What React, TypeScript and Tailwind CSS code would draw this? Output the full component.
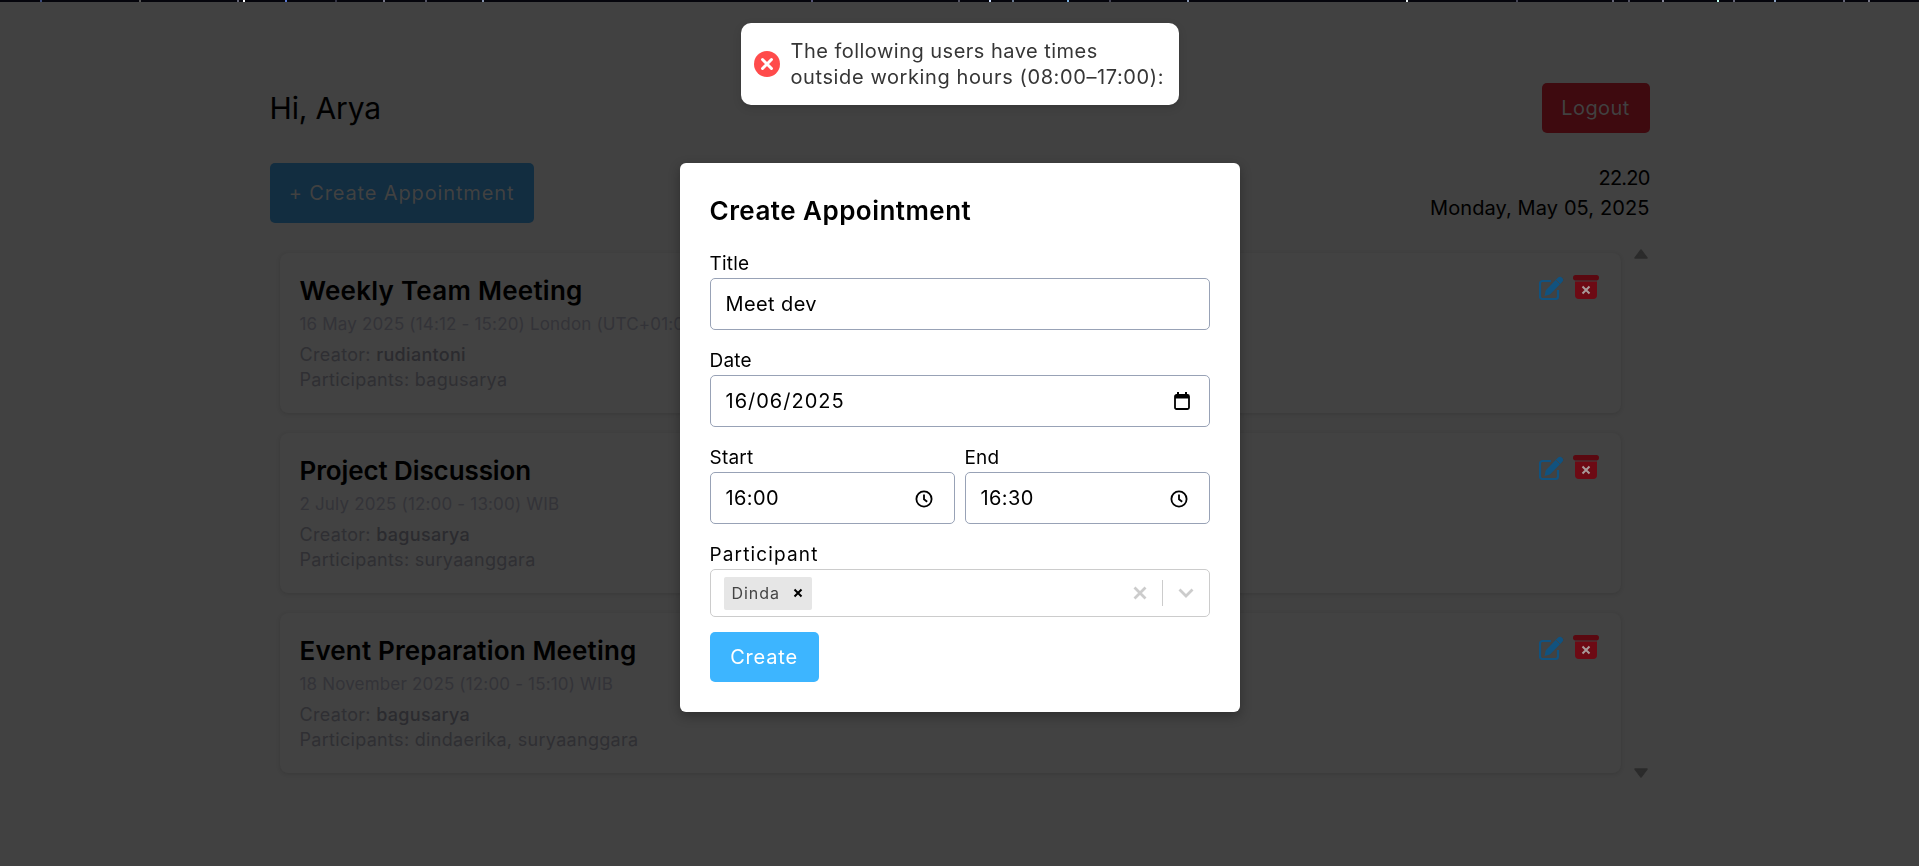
import React from "react";

const specks: [number, string][] = [
  [40, "#3a4a7a"], [139, "#555"], [237, "#667"], [243, "#fff"], [285, "#5a7ad0"], [335, "#334"], [383, "#778"], [425, "#556"], [482, "#8896b0"],
  [811, "#557"], [958, "#556"], [989, "#cfe0ff"], [1012, "#6a7a90"], [1067, "#7ab0e0"], [1109, "#445"], [1187, "#8896b0"],
  [1406, "#e8f0f0"], [1516, "#445"], [1612, "#667"], [1628, "#556"], [1662, "#889"], [1717, "#bfe"], [1733, "#667"], [1774, "#8aa0c0"], [1843, "#667"], [1868, "#778"],
];

function StarStrip() {
  return (
    <svg width="1919" height="2" className="block bg-[#05050c]">
      {specks.map(([x, c]) => (
        <rect key={x} x={x} y="0" width="2" height="2" fill={c} />
      ))}
    </svg>
  );
}

function EditIcon() {
  return (
    <svg width="25" height="25" viewBox="0 0 25 25" fill="none">
      <path d="M12 6H3.5A2.5 2.5 0 0 0 1 8.5v13A2.5 2.5 0 0 0 3.5 24h13a2.5 2.5 0 0 0 2.5-2.5V15" stroke="#11527f" strokeWidth="2.2" />
      <path d="M5.5 21 6.8 15.2 18.8 2.8a3 3 0 0 1 4.3 0 3 3 0 0 1 0 4.3L11 19.5Z" fill="#11527f" stroke="#424242" strokeWidth="1" paintOrder="stroke" />
      <path d="M16.8 4.8 21 9" stroke="#424242" strokeWidth="0.8" />
    </svg>
  );
}

function TrashIcon() {
  return (
    <svg width="26" height="24" viewBox="0 0 26 24" fill="none">
      <rect x="0" y="0" width="26" height="5.5" rx="2.7" fill="#5a0810" />
      <path d="M2 6.5h22V20a4 4 0 0 1-4 4H6a4 4 0 0 1-4-4Z" fill="#6d0a14" />
      <path d="M9.5 11.5 16.5 18.5M16.5 11.5 9.5 18.5" stroke="#a89a9a" strokeWidth="2" />
    </svg>
  );
}

function Card({ title, titleTracking, when, creator, participants }: { title: string; titleTracking: string; when: string; creator: string; participants: string }) {
  return (
    <div className="flex justify-between rounded-lg bg-[#424242] pt-5 pr-[22px] pb-[21px] pl-5 shadow-[0_1px_4px_rgba(0,0,0,0.12)]">
      <div>
        <h3 className={`pt-px text-[26px] leading-[33px] font-semibold text-black ${titleTracking}`}>{title}</h3>
        <p className="mt-1 text-[17px] leading-[27px] tracking-[0.01em] text-[#333338]">{when}</p>
        <p className="mt-1 text-[18px] leading-[25px] tracking-[0.017em] text-[#2f2f33]">
          Creator: <span className="font-medium text-[#2b2b2f]">{creator}</span>
        </p>
        <p className="text-[18px] leading-[25px] tracking-[0.017em] text-[#2f2f33]">Participants: {participants}</p>
      </div>
      <div className="mt-0.5 flex items-start gap-[9px] self-start">
        <EditIcon />
        <TrashIcon />
      </div>
    </div>
  );
}

function FieldLabel({ children, tracking = "tracking-[0.01em]" }: { children: React.ReactNode; tracking?: string }) {
  return <div className={`flex h-[30px] items-center pt-0.5 text-[19px] text-black ${tracking}`}>{children}</div>;
}

function FieldBox({ children, icon, tracking = "tracking-[0.02em]" }: { children: React.ReactNode; icon?: React.ReactNode; tracking?: string }) {
  return (
    <div className="mb-[15px] flex h-[52px] items-center justify-between rounded-[5px] border border-[#98a2b6] pr-[21px] pl-[15px] text-[20px] text-black">
      <span className={tracking}>{children}</span>
      {icon}
    </div>
  );
}

function ClockIcon() {
  return (
    <svg width="18" height="18" viewBox="0 0 18 18" fill="none" stroke="black" strokeWidth="1.8" className="mt-0.5">
      <circle cx="9" cy="9" r="7.6" />
      <path d="M9 4.5V9.3l3.2 2.4" />
    </svg>
  );
}

function CalendarIcon() {
  return (
    <svg width="16" height="18" viewBox="0 0 16 18" fill="none" className="mr-[-2px]">
      <path d="M4 0v3M12 0v3" stroke="black" strokeWidth="2" />
      <rect x="1" y="3" width="14" height="14" rx="1.5" stroke="black" strokeWidth="1.8" />
      <rect x="1" y="3" width="14" height="3.5" fill="black" />
    </svg>
  );
}

function Modal() {
  return (
    <div className="fixed inset-x-0 top-[163px] flex justify-center">
      <div className="w-[560px] rounded-md bg-white p-[30px] shadow-[0_4px_12px_rgba(0,0,0,0.3)]">
        <h2 className="mb-[19px] text-[26px] leading-9 font-semibold tracking-[0.018em] text-black">Create Appointment</h2>
        <FieldLabel>Title</FieldLabel>
        <FieldBox>Meet dev</FieldBox>
        <FieldLabel>Date</FieldLabel>
        <FieldBox icon={<CalendarIcon />} tracking="tracking-[0.05em]">16/06/2025</FieldBox>
        <div className="grid grid-cols-2 gap-x-[10px]">
          <div>
            <FieldLabel>Start</FieldLabel>
            <FieldBox icon={<ClockIcon />}>16:00</FieldBox>
          </div>
          <div>
            <FieldLabel>End</FieldLabel>
            <FieldBox icon={<ClockIcon />}>16:30</FieldBox>
          </div>
        </div>
        <FieldLabel tracking="tracking-[0.06em]">Participant</FieldLabel>
        <div className="mb-[15px] flex h-[48px] items-center justify-between rounded-[5px] border border-[#cccccc] pr-[15px] pl-[13px]">
          <div className="flex h-[33px] w-[88px] items-center justify-between rounded-[2px] bg-[#e6e6e6] pr-[9px] pl-2 text-[16px] tracking-[0.06em] text-[#444444]">
            <span>Dinda</span>
            <svg width="10" height="10" viewBox="0 0 10 10" stroke="black" strokeWidth="2">
              <path d="M1.5 1.5 8.5 8.5M8.5 1.5 1.5 8.5" />
            </svg>
          </div>
          <div className="flex items-center">
            <svg width="14" height="14" viewBox="0 0 14 14" stroke="#cccccc" strokeWidth="2.8">
              <path d="M1.5 1.5 12.5 12.5M12.5 1.5 1.5 12.5" />
            </svg>
            <div className="mx-[15px] h-[26px] w-px bg-[#cccccc]" />
            <svg width="16" height="10" viewBox="0 0 16 10" fill="none" stroke="#cccccc" strokeWidth="2.8">
              <path d="M1.5 1.5 8 8l6.5-6.5" />
            </svg>
          </div>
        </div>
        <button className="flex h-[50px] w-[109px] items-center justify-center rounded-[5px] bg-[#3db5ff] text-[20px] tracking-[0.04em] text-white">
          Create
        </button>
      </div>
    </div>
  );
}

function Toast() {
  return (
    <div className="fixed inset-x-0 top-[23px] flex justify-center">
      <div className="flex w-[438px] items-center gap-[11px] rounded-[10px] bg-white py-[15px] pl-[13px] text-[20px] leading-[26px] text-[#363636] shadow-[0_3px_10px_rgba(0,0,0,0.1),0_3px_3px_rgba(0,0,0,0.05)]">
        <svg width="26" height="26" viewBox="0 0 26 26" className="shrink-0">
          <circle cx="13" cy="13" r="13" fill="#ff4b4b" />
          <path d="M8.5 8.5 17.5 17.5M17.5 8.5 8.5 17.5" stroke="white" strokeWidth="3" strokeLinecap="round" />
        </svg>
        <div>
          <div className="tracking-[0.024em]">The following users have times</div>
          <div className="tracking-[0.03em]">outside working hours (08:00–17:00):</div>
        </div>
      </div>
    </div>
  );
}

export default function App() {
  return (
    <div className="relative h-[866px] overflow-hidden bg-[#414141] font-['Inter','Noto_Sans',sans-serif] text-black">
      <StarStrip />
      <div className="mx-auto w-[1380px] pt-[81px]">
        <header className="flex h-[50px] items-center justify-between">
          <h1 className="text-[30px] tracking-[-0.005em] text-black">Hi, Arya</h1>
          <button className="flex h-[50px] w-[108px] items-center justify-center rounded-[5px] bg-[#3e0a0f] text-[20px] tracking-[0.02em] text-[#414141]">
            Logout
          </button>
        </header>
        <div className="mt-[30px] flex h-[60px] items-start justify-between">
          <button className="flex h-[60px] w-[264px] items-center justify-center rounded-[5px] bg-[#122d40] text-[20px] tracking-[0.043em] text-[#414141]">
            + Create Appointment
          </button>
          <div className="text-right text-[20px] leading-[30px] text-black">
            <div className="tracking-[-0.04em]">22.20</div>
            <div className="tracking-[0.005em]">Monday, May 05, 2025</div>
          </div>
        </div>
        <div className="mt-5 flex h-[540px]">
          <div className="flex flex-1 flex-col gap-5 pt-[10px] pr-[14px] pl-[10px]">
            <Card title="Weekly Team Meeting" titleTracking="tracking-[0.01em]" when="16 May 2025 (14:12 - 15:20) London (UTC+01:00)" creator="rudiantoni" participants="bagusarya" />
            <Card title="Project Discussion" titleTracking="tracking-[-0.004em]" when="2 July 2025 (12:00 - 13:00) WIB" creator="bagusarya" participants="suryaanggara" />
            <Card title="Event Preparation Meeting" titleTracking="tracking-[0.006em]" when="18 November 2025 (12:00 - 15:10) WIB" creator="bagusarya" participants="dindaerika, suryaanggara" />
          </div>
          <div className="flex w-[15px] flex-col items-center justify-between pt-[6px] pr-[2px] pb-[5px]">
            <svg width="14" height="10" viewBox="0 0 14 10" fill="#2b2b2b" stroke="#2b2b2b" strokeWidth="1.5" strokeLinejoin="round"><path d="M7 1 13 9H1Z" /></svg>
            <svg width="14" height="10" viewBox="0 0 14 10" fill="#2b2b2b" stroke="#2b2b2b" strokeWidth="1.5" strokeLinejoin="round"><path d="M7 9 13 1H1Z" /></svg>
          </div>
        </div>
      </div>
      <Modal />
      <Toast />
    </div>
  );
}
